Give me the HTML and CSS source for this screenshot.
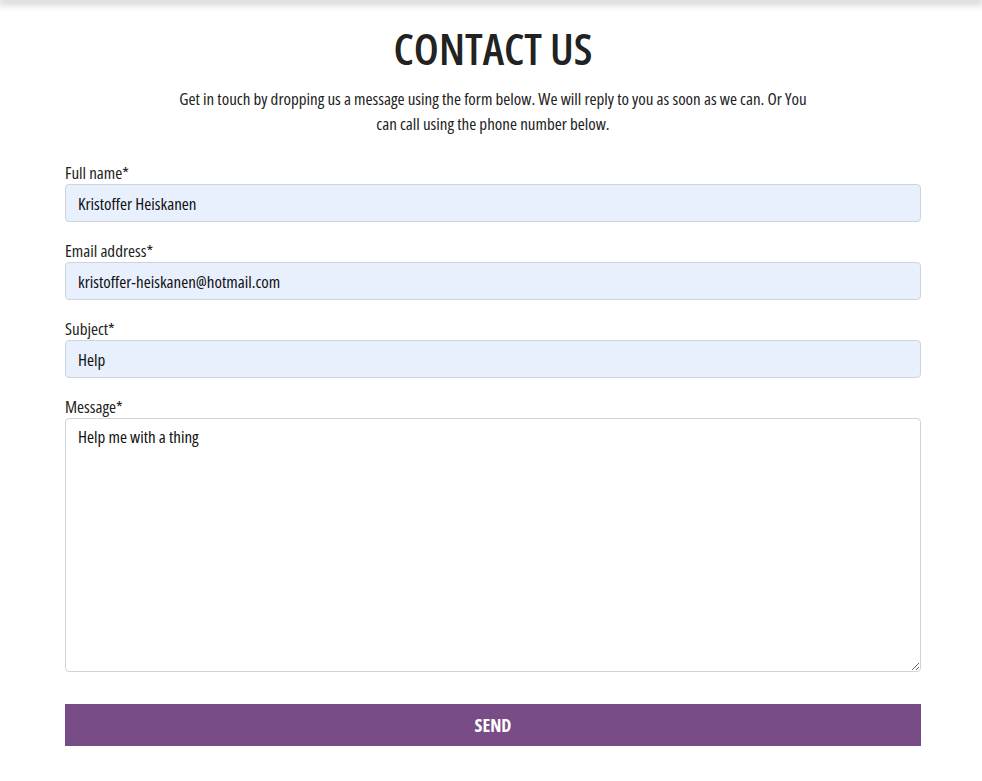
FILE: index.html
```html
<!DOCTYPE html>
<html lang="en">
<head>
<meta charset="utf-8">
<title>Contact us</title>
<link rel="stylesheet" href="styles.css">
</head>
<body>
<div class="topbar"></div>
<main class="contact">
  <h1 class="title">CONTACT US</h1>
  <p class="intro">Get in touch by dropping us a message using the form below. We will reply to you as soon as we can. Or You can call using the phone number below.</p>
  <form class="form">
    <div class="field">
      <label class="label" for="name">Full name*</label>
      <input class="input filled" id="name" type="text" value="Kristoffer Heiskanen">
    </div>
    <div class="field">
      <label class="label" for="email">Email address*</label>
      <input class="input filled" id="email" type="email" value="kristoffer-heiskanen@hotmail.com">
    </div>
    <div class="field">
      <label class="label" for="subject">Subject*</label>
      <input class="input filled" id="subject" type="text" value="Help">
    </div>
    <div class="field">
      <label class="label" for="message">Message*</label>
      <textarea class="input textarea" id="message">Help me with a thing</textarea>
    </div>
    <button class="send" type="button">SEND</button>
  </form>
</main>
</body>
</html>
```
FILE: styles.css
```css
html, body {
  margin: 0;
  padding: 0;
  background: #fff;
}
body {
  font-family: "Open Sans", "Roboto", sans-serif;
  font-stretch: 75%;
  color: #222;
}
.topbar {
  height: 0;
  box-shadow: 0 1px 8px 2px rgba(0, 0, 0, 0.35);
}
.contact {
  padding: 23px 61px 0 65px;
}
.title {
  margin: 0;
  text-align: center;
  font-size: 44px;
  line-height: 50px;
  font-weight: 600;
  color: #222;
}
.intro {
  max-width: 640px;
  margin: 13px auto 26px;
  text-align: center;
  font-size: 17px;
  line-height: 25px;
  color: #222;
}
.form {
  display: flex;
  flex-direction: column;
}
.field {
  display: flex;
  flex-direction: column;
  margin-bottom: 18px;
}
.label {
  font-size: 17px;
  line-height: 22px;
  color: #222;
}
.input {
  box-sizing: border-box;
  width: 100%;
  height: 38px;
  margin: 0;
  padding: 6px 12px;
  border: 1px solid #ced4da;
  border-radius: 4px;
  font-family: inherit;
  font-stretch: 75%;
  font-size: 17px;
  color: #111;
  background: #fff;
}
.filled {
  background: #e8f0fe;
}
.textarea {
  height: 254px;
  resize: vertical;
  line-height: 24px;
  padding-top: 6px;
}
.send {
  margin-top: 14px;
  height: 42px;
  border: none;
  background: #784c86;
  color: #fff;
  font-family: inherit;
  font-stretch: 75%;
  font-weight: 700;
  font-size: 18px;
  cursor: pointer;
}
```
